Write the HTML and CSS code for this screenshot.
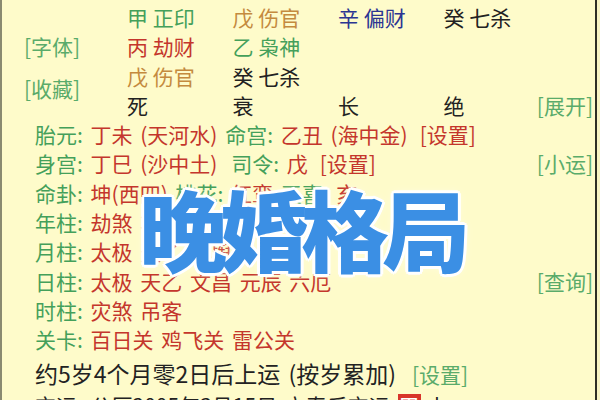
FILE: index.html
```html
<!DOCTYPE html>
<html lang="zh">
<head>
<meta charset="utf-8">
<link rel="stylesheet" href="styles.css">
</head>
<body>
<div class="screen">
  <div class="top">
    <span class="cell"></span>
    <span class="cell green">甲 正印</span>
    <span class="cell brown">戊 伤官</span>
    <span class="cell navy">辛 偏财</span>
    <span class="cell dark">癸 七杀</span>
    <span class="cell"></span>

    <span class="cell link">[字体]</span>
    <span class="cell red">丙 劫财</span>
    <span class="cell green">乙 枭神</span>
    <span class="cell"></span>
    <span class="cell"></span>
    <span class="cell"></span>

    <span class="cell link fav">[收藏]</span>
    <span class="cell brown">戊 伤官</span>
    <span class="cell dark">癸 七杀</span>
    <span class="cell"></span>
    <span class="cell"></span>
    <span class="cell"></span>

    <span class="cell dark">死</span>
    <span class="cell dark">衰</span>
    <span class="cell dark">长</span>
    <span class="cell dark">绝</span>
    <span class="cell link end">[展开]</span>
  </div>

  <div class="rows">
    <div class="row">
      <span><span class="green">胎元: </span><span class="red">丁未 (天河水)</span> <span class="green">命宫: </span><span class="red">乙丑 (海中金)</span><span class="red gap">[设置]</span></span>
    </div>
    <div class="row">
      <span><span class="green">身宫: </span><span class="red">丁巳 (沙中土)</span> <span class="green gap-s">司令: </span><span class="red">戊</span><span class="red gap">[设置]</span></span>
      <span class="link">[小运]</span>
    </div>
    <div class="row">
      <span><span class="green">命卦: </span><span class="red">坤(西四)</span> <span class="green">桃花: </span><span class="red">红鸾</span> <span class="green">天喜: </span><span class="red">亥</span></span>
    </div>
    <div class="row">
      <span><span class="green">年柱: </span><span class="red">劫煞 将星 天德</span></span>
    </div>
    <div class="row">
      <span><span class="green">月柱: </span><span class="red">太极 天乙 金舆</span></span>
    </div>
    <div class="row">
      <span><span class="green">日柱: </span><span class="red">太极 天乙 文昌 元辰 六厄</span></span>
      <span class="link">[查询]</span>
    </div>
    <div class="row">
      <span><span class="green">时柱: </span><span class="red">灾煞 吊客</span></span>
    </div>
    <div class="row">
      <span><span class="green">关卡: </span><span class="red">百日关 鸡飞关 雷公关</span></span>
    </div>
    <div class="row big">
      <span class="dark">约5岁4个月零2日后上运 (按岁累加)<span class="link gap-b">[设置]</span></span>
    </div>
    <div class="row">
      <span class="dark">交运: 公历2005年3月15日 立春后交运 <span class="hl">甲</span> 卜</span>
    </div>
  </div>

  <div class="overlay">晚婚格局</div>
</div>
</body>
</html>
```

FILE: styles.css
```css
html, body {
  margin: 0;
  padding: 0;
}
body {
  width: 600px;
  height: 400px;
  overflow: hidden;
  background: #f8f4c2;
  font-family: "Noto Sans CJK SC", "Noto Sans", sans-serif;
  font-size: 21px;
}
.screen {
  position: relative;
  box-sizing: border-box;
  width: 597px;
  height: 400px;
  overflow: hidden;
  background: #fefbca;
  border-left: 2px solid #8a8a70;
  border-right: 2px solid #2e2e24;
  padding-right: 2px;
  line-height: 29.3px;
}
.top {
  display: grid;
  grid-template-columns: 125px 105.5px 105.5px 105.5px 1fr auto;
  grid-auto-rows: 29.3px;
  padding-top: 3px;
  white-space: nowrap;
}
.cell {
  display: block;
}
.top .link {
  padding-left: 22px;
}
.top .fav {
  grid-row: 3 / 5;
  grid-column: 1;
  align-self: center;
  margin-top: -4px;
}
.top .end {
  padding-left: 0;
  justify-self: end;
}
.rows {
  padding-left: 33px;
  white-space: nowrap;
  word-spacing: 3px;
}
.row {
  display: flex;
  justify-content: space-between;
  height: 29.3px;
}
.row.big {
  font-size: 23px;
  height: 36px;
  line-height: 36px;
}
.green { color: #44a05a; }
.red { color: #c4362c; }
.brown { color: #c48a3e; }
.navy { color: #2b3592; }
.dark { color: #222222; }
.link { color: #5aab6a; }
.gap { margin-left: 12px; }
.gap-s { margin-left: 6px; }
.gap-b { margin-left: 16px; font-size: 21px; }
.hl {
  display: inline-block;
  background: #d8352a;
  color: #ffffff;
  line-height: 22px;
  padding: 0 1px;
}
.overlay {
  position: absolute;
  left: 137px;
  top: 183px;
  font-size: 88px;
  line-height: 1;
  font-weight: 900;
  color: #3b8fe4;
  letter-spacing: -7px;
  white-space: nowrap;
  text-shadow:
    3px 0 0 #fff, -3px 0 0 #fff, 0 3px 0 #fff, 0 -3px 0 #fff,
    2px 2px 0 #fff, -2px 2px 0 #fff, 2px -2px 0 #fff, -2px -2px 0 #fff,
    0 0 8px #fffde8;
}
```
